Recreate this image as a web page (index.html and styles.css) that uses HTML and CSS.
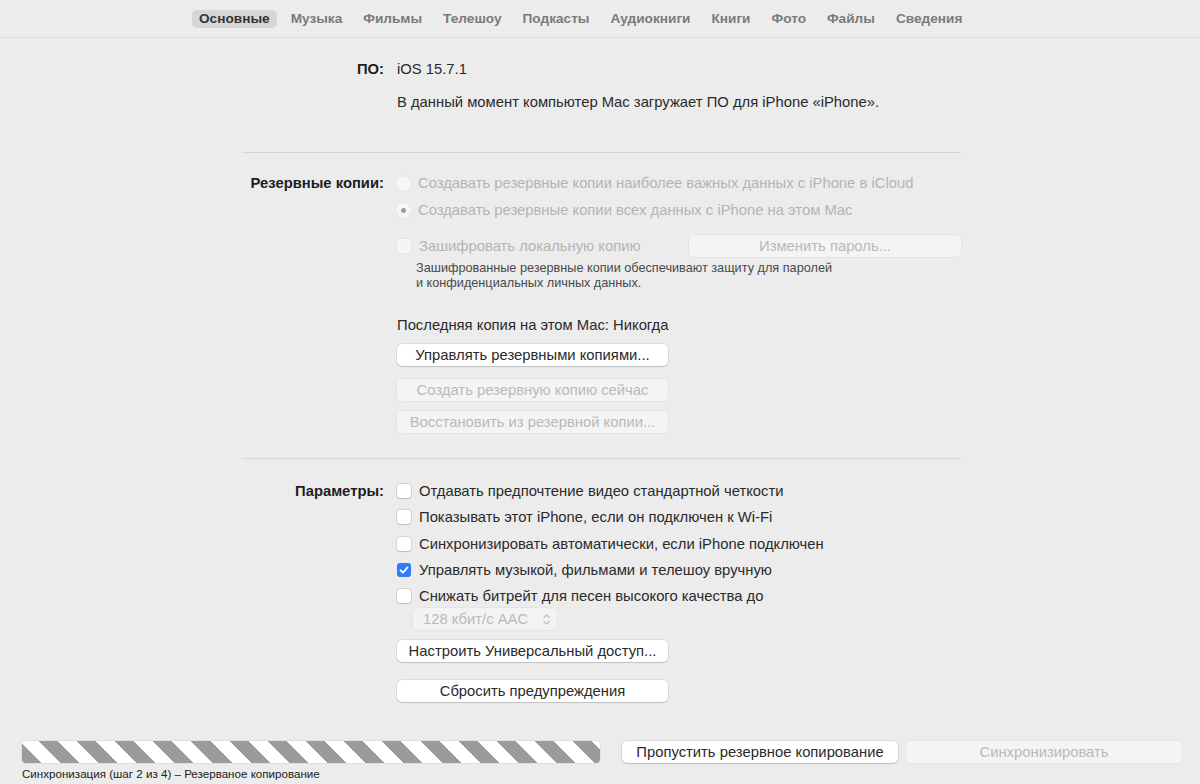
FILE: index.html
```html
<!DOCTYPE html>
<html lang="ru">
<head>
  <meta charset="UTF-8" />
  <title>iPhone — Основные</title>
  <link rel="stylesheet" href="styles.css">
</head>
<body>

  <nav class="tabs">
    <span class="tab active">Основные</span>
    <span class="tab">Музыка</span>
    <span class="tab">Фильмы</span>
    <span class="tab">Телешоу</span>
    <span class="tab">Подкасты</span>
    <span class="tab">Аудиокниги</span>
    <span class="tab">Книги</span>
    <span class="tab">Фото</span>
    <span class="tab">Файлы</span>
    <span class="tab">Сведения</span>
  </nav>

  <main class="content">

    <section class="section software">
      <div class="row">
        <div class="label">ПО:</div>
        <div class="value">iOS 15.7.1</div>
      </div>
      <div class="row row-status">
        <div class="label"></div>
        <div class="value">В данный момент компьютер Mac загружает ПО для iPhone «iPhone».</div>
      </div>
    </section>

    <section class="section backups">
      <div class="row">
        <div class="label">Резервные копии:</div>
        <div class="value option disabled">
          <span class="radio"></span>
          Создавать резервные копии наиболее важных данных с iPhone в iCloud
        </div>
      </div>
      <div class="row row-radio2">
        <div class="label"></div>
        <div class="value option disabled">
          <span class="radio selected"></span>
          Создавать резервные копии всех данных с iPhone на этом Mac
        </div>
      </div>
      <div class="row row-encrypt">
        <div class="label"></div>
        <div class="value encrypt">
          <span class="option disabled"><span class="checkbox"></span>Зашифровать локальную копию</span>
          <button class="btn btn-wide" disabled>Изменить пароль...</button>
        </div>
      </div>
      <div class="row row-note">
        <div class="label"></div>
        <div class="value note">Зашифрованные резервные копии обеспечивают защиту для паролей<br>и конфиденциальных личных данных.</div>
      </div>
      <div class="row row-last">
        <div class="label"></div>
        <div class="value">Последняя копия на этом Mac: Никогда</div>
      </div>
      <div class="row row-btn">
        <div class="label"></div>
        <div class="value"><button class="btn">Управлять резервными копиями...</button></div>
      </div>
      <div class="row row-btn2">
        <div class="label"></div>
        <div class="value"><button class="btn" disabled>Создать резервную копию сейчас</button></div>
      </div>
      <div class="row row-btn3">
        <div class="label"></div>
        <div class="value"><button class="btn" disabled>Восстановить из резервной копии...</button></div>
      </div>
    </section>

    <section class="section params">
      <div class="row row-check">
        <div class="label">Параметры:</div>
        <div class="value option"><span class="checkbox"></span>Отдавать предпочтение видео стандартной четкости</div>
      </div>
      <div class="row row-check">
        <div class="label"></div>
        <div class="value option"><span class="checkbox"></span>Показывать этот iPhone, если он подключен к Wi-Fi</div>
      </div>
      <div class="row row-check">
        <div class="label"></div>
        <div class="value option"><span class="checkbox"></span>Синхронизировать автоматически, если iPhone подключен</div>
      </div>
      <div class="row row-check">
        <div class="label"></div>
        <div class="value option">
          <span class="checkbox checked">
            <svg viewBox="0 0 14 14" width="14" height="14"><path d="M3.6 7.3 L6 9.7 L10.6 4.4" fill="none" stroke="#fff" stroke-width="1.8" stroke-linecap="round" stroke-linejoin="round"/></svg>
          </span>Управлять музыкой, фильмами и телешоу вручную
        </div>
      </div>
      <div class="row row-check">
        <div class="label"></div>
        <div class="value option"><span class="checkbox"></span>Снижать битрейт для песен высокого качества до</div>
      </div>
      <div class="row row-popup">
        <div class="label"></div>
        <div class="value">
          <span class="popup">128 кбит/с AAC
            <svg viewBox="0 0 10 14" width="9" height="13"><path d="M2 5 L5 2 L8 5 M2 9 L5 12 L8 9" fill="none" stroke="#bdbdbd" stroke-width="1.3" stroke-linecap="round" stroke-linejoin="round"/></svg>
          </span>
        </div>
      </div>
      <div class="row row-access">
        <div class="label"></div>
        <div class="value"><button class="btn">Настроить Универсальный доступ...</button></div>
      </div>
      <div class="row row-reset">
        <div class="label"></div>
        <div class="value"><button class="btn">Сбросить предупреждения</button></div>
      </div>
    </section>

  </main>

  <footer class="footer">
    <div class="progress-block">
      <div class="progress"></div>
      <div class="progress-label">Синхронизация (шаг 2 из 4) – Резерваное копирование</div>
    </div>
    <button class="btn btn-footer">Пропустить резервное копирование</button>
    <button class="btn btn-footer" disabled>Синхронизировать</button>
  </footer>

</body>
</html>
```

FILE: styles.css
```css
/* Basic reset */
* {
  margin: 0;
  padding: 0;
  box-sizing: border-box;
}

body {
  font-family: "Liberation Sans", Arial, sans-serif;
  font-size: 14.8px;
  color: #2a2a2a;
  background: #ececec;
  height: 100vh;
  display: flex;
  flex-direction: column;
  overflow: hidden;
}

/* Tab bar */
.tabs {
  height: 38px;
  display: flex;
  align-items: center;
  padding-left: 192px;
  border-bottom: 1px solid #dcdcdc;
}

.tab {
  font-weight: bold;
  font-size: 13.65px;
  color: #7b7b7b;
  padding: 1px 7px 2px;
  margin-right: 7px;
  border-radius: 5px;
}

.tab.active {
  background: #d6d6d6;
  color: #333;
}

/* Main form */
.content {
  flex: 1;
  width: 719px;
  margin-left: 242px;
}

.section + .section {
  border-top: 1px solid #d6d6d6;
}

.row {
  display: flex;
  align-items: center;
  min-height: 20px;
}

.label {
  width: 143px;
  flex-shrink: 0;
  text-align: right;
  font-weight: bold;
  color: #1e1e1e;
  padding-right: 1px;
}

.value {
  margin-left: 12px;
  flex: 1;
}

.software {
  padding-top: 21px;
  padding-bottom: 40px;
}

.row-status {
  margin-top: 13px;
}

.backups {
  padding-top: 20px;
  padding-bottom: 25px;
}

.row-radio2 {
  margin-top: 7px;
}

.row-encrypt {
  margin-top: 15px;
}

.row-note {
  margin-top: 4px;
}

.row-last {
  margin-top: 24px;
}

.row-btn {
  margin-top: 9px;
}

.row-btn2 {
  margin-top: 13px;
}

.row-btn3 {
  margin-top: 10px;
}

.params {
  padding-top: 22px;
}

.row-check + .row-check {
  margin-top: 6.25px;
}

.row-popup {
  margin-top: 2px;
}

.row-access {
  margin-top: 10px;
}

.row-reset {
  margin-top: 18px;
}

/* Options */
.option {
  display: flex;
  align-items: center;
}

.option.disabled {
  color: #b4b4b4;
}

.radio {
  width: 15px;
  height: 15px;
  border-radius: 50%;
  background: #f6f6f6;
  box-shadow: 0 0 0 0.5px rgba(0, 0, 0, 0.06);
  margin-left: -1px;
  margin-right: 7px;
  display: inline-flex;
  align-items: center;
  justify-content: center;
}

.radio.selected::after {
  content: "";
  width: 5px;
  height: 5px;
  border-radius: 50%;
  background: #9d9d9d;
}

.checkbox {
  width: 14px;
  height: 14px;
  border-radius: 3px;
  background: #fff;
  box-shadow: 0 0 0 0.5px rgba(0, 0, 0, 0.2), 0 0.5px 1px rgba(0, 0, 0, 0.1);
  margin-right: 8px;
  flex-shrink: 0;
  display: inline-flex;
}

.option.disabled .checkbox {
  background: #f5f5f5;
  box-shadow: 0 0 0 0.5px rgba(0, 0, 0, 0.05);
}

.checkbox.checked {
  background: #2f7cf6;
  box-shadow: none;
}

.encrypt {
  display: flex;
  align-items: center;
  justify-content: space-between;
}

.note {
  font-size: 12.7px;
  line-height: 15px;
  color: #4a4a4a;
  padding-left: 19px;
}

/* Buttons */
.btn {
  font-family: inherit;
  font-size: 14.8px;
  color: #2a2a2a;
  background: #fff;
  border: none;
  border-radius: 5px;
  height: 22px;
  width: 271px;
  box-shadow: 0 0 0 0.5px rgba(0, 0, 0, 0.14), 0 1px 1px rgba(0, 0, 0, 0.12);
}

.btn:disabled {
  background: #f4f4f4;
  color: #b9b9b9;
  box-shadow: 0 0 0 0.5px rgba(0, 0, 0, 0.06);
}

.btn-wide {
  width: 272px;
}

.popup {
  margin-left: 16px;
  width: 144px;
  height: 22px;
  display: inline-flex;
  align-items: center;
  justify-content: space-between;
  padding: 0 6px 0 10px;
  color: #b9b9b9;
  background: #f3f3f3;
  border-radius: 5px;
  box-shadow: 0 0 0 0.5px rgba(0, 0, 0, 0.06);
}

/* Footer */
.footer {
  display: flex;
  align-items: flex-start;
  padding: 0 18px 0 22px;
  height: 43px;
}

.progress-block {
  width: 578px;
  flex-shrink: 0;
  margin-right: 22px;
}

.progress {
  height: 22px;
  border-radius: 4px;
  background: repeating-linear-gradient(45deg, #9b9b9b 0, #9b9b9b 13.5px, #fff 13.5px, #fff 27px);
  box-shadow: 0 0 0 0.5px rgba(0, 0, 0, 0.12);
}

.progress-label {
  font-size: 11.6px;
  color: #222;
  margin-top: 4px;
}

.btn-footer {
  width: 276px;
  flex-shrink: 0;
}

.btn-footer + .btn-footer {
  margin-left: 8px;
}
```
